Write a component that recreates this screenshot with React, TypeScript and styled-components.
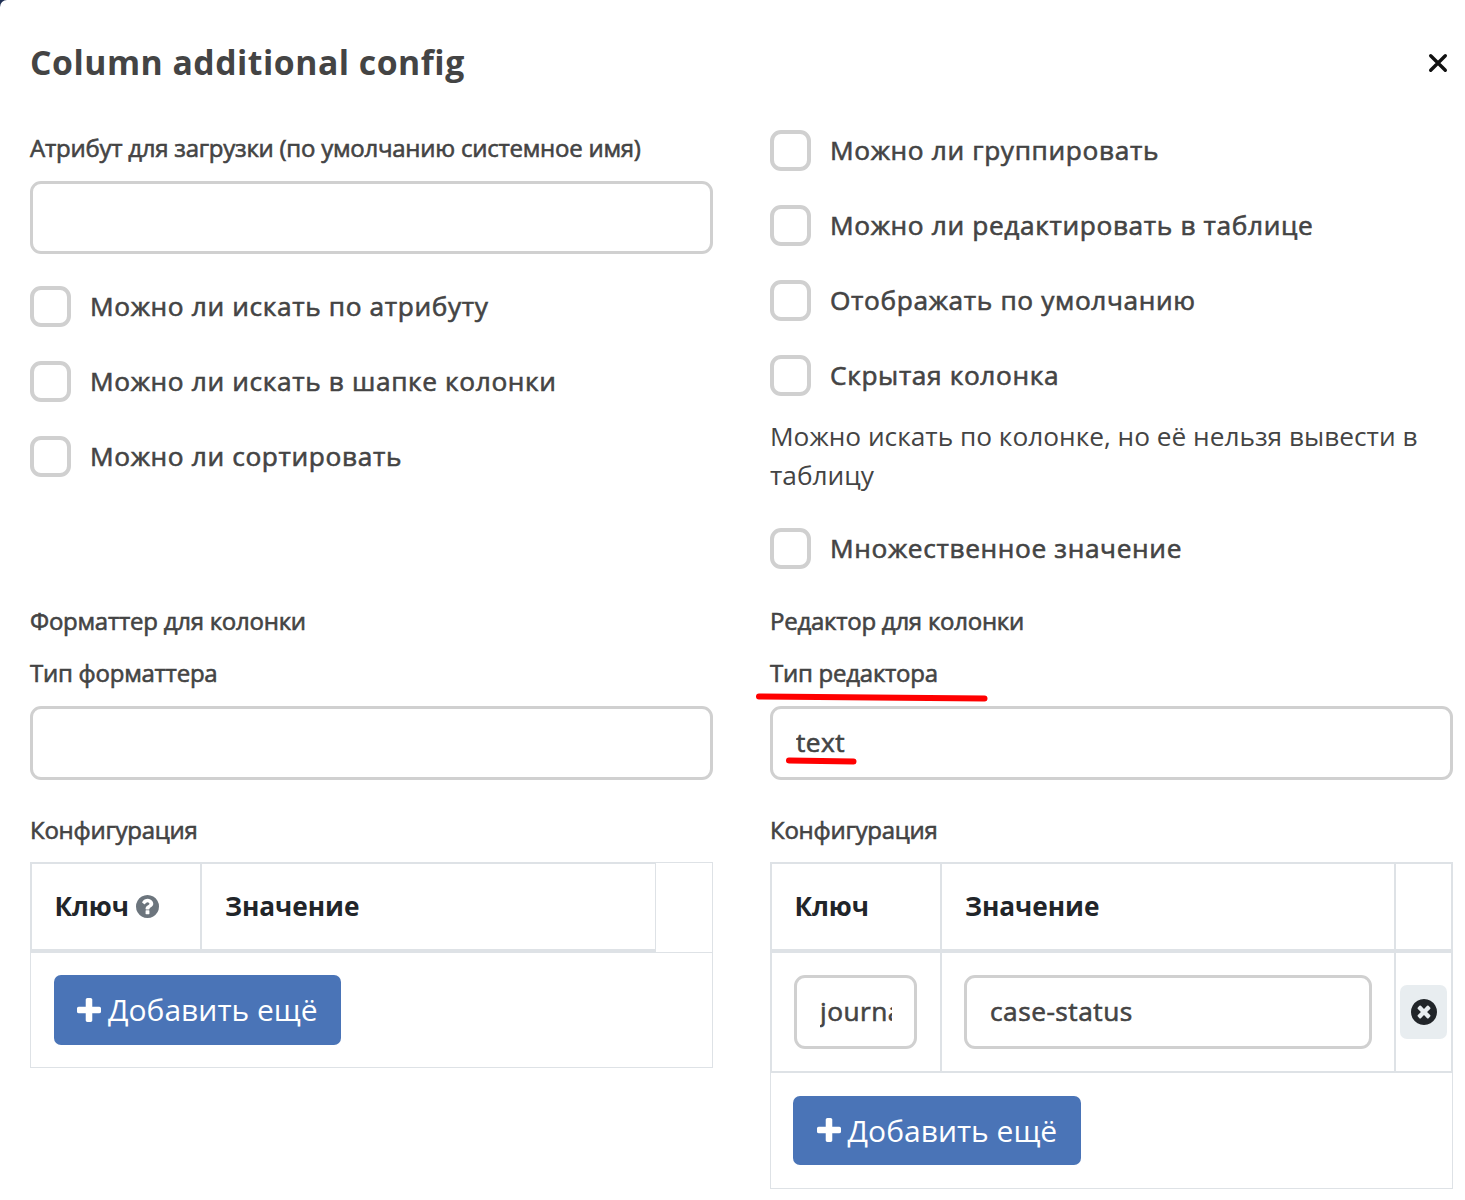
import React from "react";
import styled, { createGlobalStyle, css } from "styled-components";

const GlobalStyle = createGlobalStyle`
  *, *::before, *::after { box-sizing: border-box; }
  body {
    margin: 0;
    background: #1f3054;
    font-family: "Open Sans", "Noto Sans", sans-serif;
    color: #444;
  }
`;

const line = "#dee2e6";

const medium = css`
  font-weight: 400;
  -webkit-text-stroke: 0.6px #444;
`;

const Modal = styled.main`
  position: relative;
  width: 1465px;
  height: 1200px;
  padding: 0 12px 0 30px;
  background: #fff;
  border-top-left-radius: 7px;
  overflow: hidden;
`;

const Header = styled.header`
  display: flex;
  justify-content: space-between;
  align-items: center;
  height: 126px;
  padding-right: 5px;
`;

const Title = styled.h1`
  margin: 0;
  padding-bottom: 2px;
  font-size: 33.75px;
  line-height: 46px;
  font-weight: 700;
  letter-spacing: 0.5px;
`;

const CloseButton = styled.button`
  display: flex;
  padding: 0;
  border: 0;
  background: none;
`;

const Columns = styled.div<{ $height?: number }>`
  display: grid;
  grid-template-columns: 683px 683px;
  column-gap: 57px;
  height: ${(p) => (p.$height ? `${p.$height}px` : "auto")};
`;

const Column = styled.section`
  display: flex;
  flex-direction: column;
  min-width: 0;
`;

const Label = styled.label<{ $height: number; $line?: number }>`
  display: block;
  height: ${(p) => p.$height}px;
  font-size: 24px;
  line-height: ${(p) => p.$line ?? 42}px;
  letter-spacing: -0.25px;
  white-space: nowrap;
  ${medium}
`;

const ConfigLabel = styled(Label)`
  padding-top: 29px;
`;

const Input = styled.input<{ $height?: number }>`
  display: block;
  width: 100%;
  height: ${(p) => p.$height ?? 73}px;
  padding: 0 22px 2px 23px;
  border: 3px solid #d0d0d0;
  border-radius: 11px;
  outline: 0;
  background: #fff;
  color: #444;
  font: 400 26.25px "Open Sans", "Noto Sans", sans-serif;
  letter-spacing: 0.5px;
  ${medium}
`;

const Checks = styled.div<{ $top?: number }>`
  display: flex;
  flex-direction: column;
  gap: 34px;
  margin-top: ${(p) => p.$top ?? 0}px;
`;

const CheckRow = styled.label`
  display: flex;
  align-items: center;
  gap: 19px;
  height: 41px;
  font-size: 26.25px;
  letter-spacing: 0.64px;
  white-space: nowrap;
  ${medium}
`;

const CheckText = styled.span`
  padding-bottom: 2px;
`;

const Box = styled.input`
  appearance: none;
  flex: none;
  width: 41px;
  height: 41px;
  margin: 0;
  border: 4px solid #d0d0d0;
  border-radius: 11px;
  background: #fff;
`;

const Hint = styled.p`
  margin: 21px 0 0;
  height: 111px;
  font-size: 26.25px;
  line-height: 39px;
`;

const Table = styled.div`
  display: flex;
  flex-direction: column;
  border: 1px solid ${line};
`;

const Row = styled.div<{ $head?: boolean }>`
  display: grid;
  grid-template-columns: 172px 454px 1fr;
  height: ${(p) => (p.$head ? 91 : 120)}px;
  margin: ${(p) => (p.$head ? "-1px" : "0")} -1px 0;
`;

const HeadCell = styled.div<{ $first?: boolean; $edge?: number }>`
  display: flex;
  align-items: center;
  gap: 7px;
  padding: 0 0 1px ${(p) => (p.$first ? 22.4 : 23)}px;
  border: 0 solid ${line};
  border-width: 2px ${(p) => p.$edge ?? 2}px 4px ${(p) => (p.$first ? 2 : 0)}px;
  color: #212529;
  font-size: 26.25px;
  font-weight: 700;
  letter-spacing: -0.05px;
`;

const BlankCell = styled.div`
  height: 91px;
  border: 0 solid ${line};
  border-width: 1px 1px 1px 0;
`;

const Cell = styled.div<{ $first?: boolean; $pad?: string }>`
  display: flex;
  align-items: center;
  padding: ${(p) => p.$pad ?? "0 22px"};
  border: 0 solid ${line};
  border-width: 0 2px 2px ${(p) => (p.$first ? 2 : 0)}px;
`;

const Footer = styled.div<{ $pad?: string }>`
  display: flex;
  padding: ${(p) => p.$pad ?? "22px 0 22px 23px"};
`;

const AddButton = styled.button<{ $width?: number; $height?: number; $inset?: number }>`
  display: flex;
  align-items: center;
  gap: 7px;
  width: ${(p) => p.$width ?? 287}px;
  height: ${(p) => p.$height ?? 70}px;
  padding: 0 0 1px ${(p) => p.$inset ?? 23}px;
  border: 0;
  border-radius: 7px;
  background: #4a74b7;
  color: #fff;
  font: 400 30px "Open Sans", "Noto Sans", sans-serif;
  white-space: nowrap;
`;

const RemoveButton = styled.button`
  display: flex;
  align-items: center;
  justify-content: center;
  width: 47px;
  height: 54px;
  padding: 0;
  border: 0;
  border-radius: 7px;
  background: #e8edf0;
  color: #212529;
`;

const Icon = styled.svg<{ $size: number }>`
  flex: none;
  width: ${(p) => p.$size}px;
  height: ${(p) => p.$size}px;
  fill: currentColor;
`;

const HelpIcon = styled(Icon)`
  color: #6c757d;
`;

const Marks = styled.svg`
  position: absolute;
  left: 750px;
  top: 685px;
  width: 245px;
  height: 85px;
  fill: none;
  stroke: #f00;
  stroke-width: 6;
  stroke-linecap: round;
  pointer-events: none;
`;

const ring =
  "M1664 896q0 209-103 385.5T1281.5 1561 896 1664t-385.5-103T231 1281.5 128 896t103-385.5T510.5 231 896 128t385.5 103T1561 510.5 1664 896z";

const Plus = () => (
  <Icon $size={24} viewBox="192 128 1408 1408">
    <path d="M1600 736v192q0 40-28 68t-68 28h-416v416q0 40-28 68t-68 28H800q-40 0-68-28t-28-68v-416H288q-40 0-68-28t-28-68V736q0-40 28-68t68-28h416V224q0-40 28-68t68-28h192q40 0 68 28t28 68v416h416q40 0 68 28t28 68z" />
  </Icon>
);

const Help = () => (
  <HelpIcon $size={23} viewBox="128 128 1536 1536">
    <path
      fillRule="evenodd"
      d={
        "M1024 1376v-192q0-14-9-23t-23-9H800q-14 0-23 9t-9 23v192q0 14 9 23t23 9h192q14 0 23-9t9-23zm256-672q0-88-55.5-163t-138.5-116-170-41q-243 0-371 213-15 24 8 42l132 100q7 6 19 6 16 0 25-12 53-68 86-92 34-24 86-24 48 0 85.5 26t37.5 59q0 38-20 61t-68 45q-63 28-115.5 86.5T768 1020v36q0 14 9 23t23 9h192q14 0 23-9t9-23q0-19 21.5-49.5T1100 957q32-18 49-28.5t46-35 44.5-48 28-60.5 12.5-81z" +
        ring
      }
    />
  </HelpIcon>
);

const Remove = () => (
  <Icon $size={26} viewBox="128 128 1536 1536">
    <path
      fillRule="evenodd"
      d={
        "M1277 1122q0-26-19-45l-181-181 181-181q19-19 19-45 0-27-19-46l-90-90q-19-19-46-19-26 0-45 19L896 715 715 534q-19-19-45-19-27 0-46 19l-90 90q-19 19-19 46 0 26 19 45l181 181-181 181q-19 19-19 45 0 27 19 46l90 90q19 19 46 19 26 0 45-19l181-181 181 181q19 19 45 19 27 0 46-19l90-90q19-19 19-46z" +
        ring
      }
    />
  </Icon>
);

const Check = ({ text }: { text: string }) => (
  <CheckRow>
    <Box type="checkbox" />
    <CheckText>{text}</CheckText>
  </CheckRow>
);

export default function App() {
  return (
    <>
      <GlobalStyle />
      <Modal>
        <Header>
          <Title>Column additional config</Title>
          <CloseButton aria-label="Close">
            <svg width="20" height="20" viewBox="0 0 20 20" fill="none" stroke="#111" strokeWidth="3.4" strokeLinecap="round">
              <path d="M2.7 2.7 17.3 17.3M17.3 2.7 2.7 17.3" />
            </svg>
          </CloseButton>
        </Header>

        <Columns $height={474}>
          <Column>
            <Label $height={55} $line={44}>Атрибут для загрузки (по умолчанию системное имя)</Label>
            <Input />
            <Checks $top={32}>
              <Check text="Можно ли искать по атрибуту" />
              <Check text="Можно ли искать в шапке колонки" />
              <Check text="Можно ли сортировать" />
            </Checks>
          </Column>
          <Column>
            <Checks $top={4}>
              <Check text="Можно ли группировать" />
              <Check text="Можно ли редактировать в таблице" />
              <Check text="Отображать по умолчанию" />
              <Check text="Скрытая колонка" />
            </Checks>
            <Hint>Можно искать по колонке, но её нельзя вывести в таблицу</Hint>
            <Check text="Множественное значение" />
          </Column>
        </Columns>

        <Columns>
          <Column>
            <Label $height={52}>Форматтер для колонки</Label>
            <Label $height={54}>Тип форматтера</Label>
            <Input $height={74} />
          </Column>
          <Column>
            <Label $height={52}>Редактор для колонки</Label>
            <Label $height={54}>Тип редактора</Label>
            <Input $height={74} defaultValue="text" />
          </Column>
        </Columns>

        <Columns>
          <Column>
            <ConfigLabel $height={82}>Конфигурация</ConfigLabel>
            <Table>
              <Row $head>
                <HeadCell $first>
                  Ключ <Help />
                </HeadCell>
                <HeadCell $edge={1}>Значение</HeadCell>
                <BlankCell />
              </Row>
              <Footer>
                <AddButton>
                  <Plus />
                  Добавить ещё
                </AddButton>
              </Footer>
            </Table>
          </Column>
          <Column>
            <ConfigLabel $height={82}>Конфигурация</ConfigLabel>
            <Table>
              <Row $head>
                <HeadCell $first>Ключ</HeadCell>
                <HeadCell>Значение</HeadCell>
                <HeadCell />
              </Row>
              <Row>
                <Cell $first $pad="0 23px 0 22px">
                  <Input $height={74} defaultValue="journalId" />
                </Cell>
                <Cell>
                  <Input $height={74} defaultValue="case-status" />
                </Cell>
                <Cell $pad="0 4px">
                  <RemoveButton aria-label="Remove">
                    <Remove />
                  </RemoveButton>
                </Cell>
              </Row>
              <Footer $pad="23px 0 23px 22px">
                <AddButton $width={288} $height={69} $inset={23.6}>
                  <Plus />
                  Добавить ещё
                </AddButton>
              </Footer>
            </Table>
          </Column>
        </Columns>

        <Marks viewBox="0 0 245 85">
          <path d="M9 11.5 234.5 13.5" />
          <path d="M39 75.5 103.5 76.5" />
        </Marks>
      </Modal>
    </>
  );
}
